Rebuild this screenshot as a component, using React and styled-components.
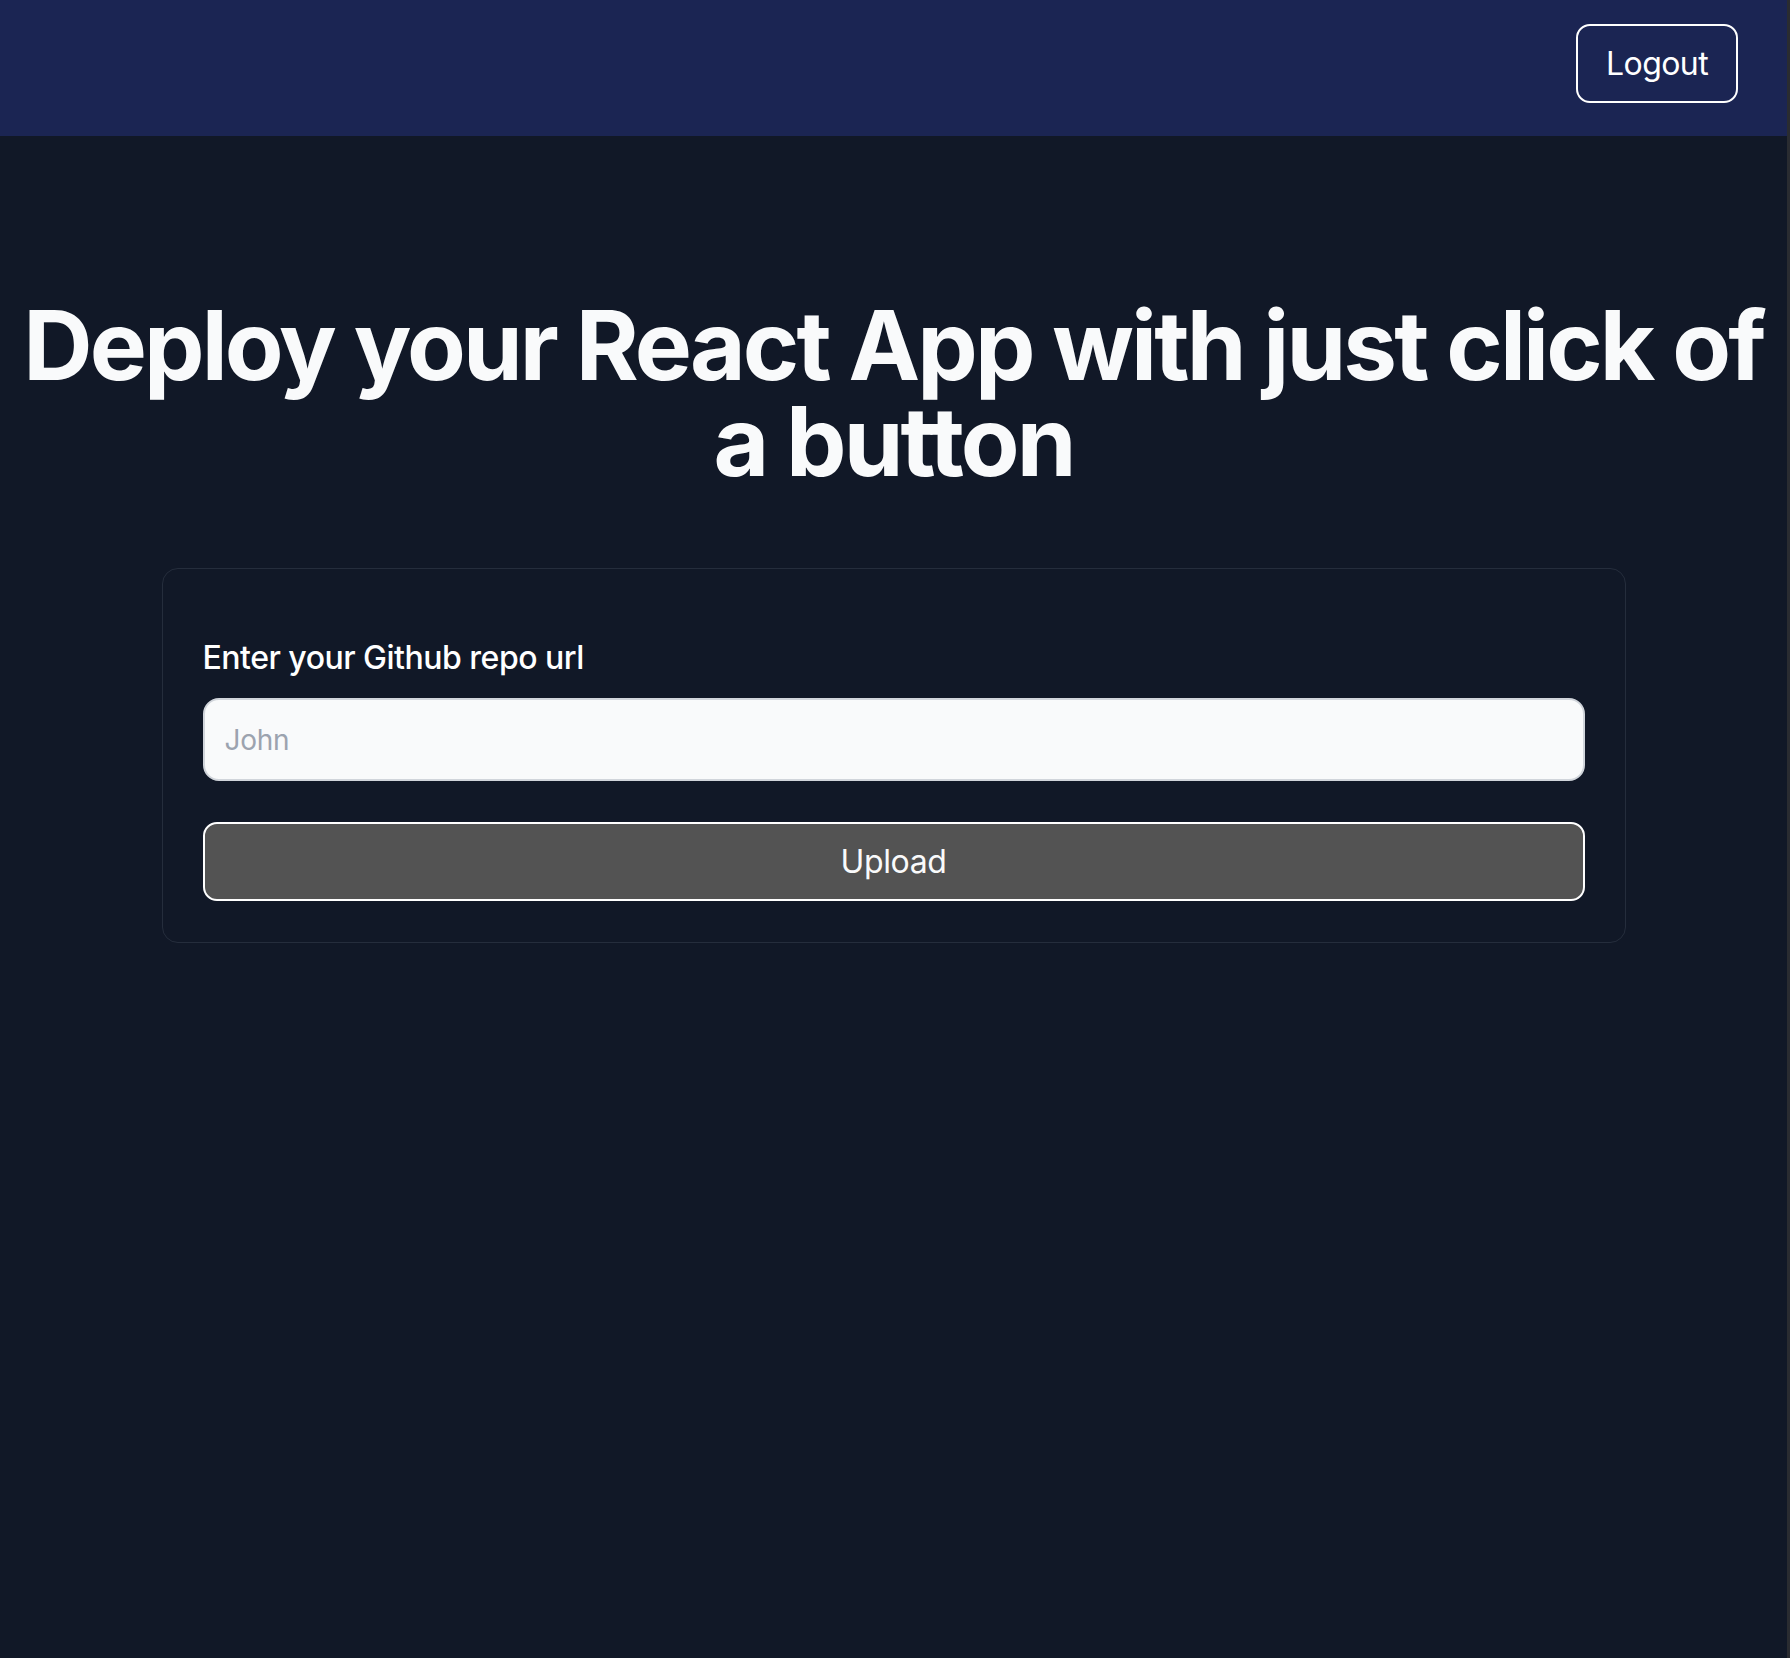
import React, { useState } from "react";
import styled, { createGlobalStyle } from "styled-components";

const GlobalStyle = createGlobalStyle`
  * {
    box-sizing: border-box;
  }
  html, body {
    margin: 0;
    padding: 0;
    background: #111827;
  }
  body {
    font-family: Inter, "Noto Sans", "Liberation Sans", sans-serif;
  }
`;

const Page = styled.div`
  min-height: 1658px;
  background: #111827;
  border-right: 3px solid #2a2c31;
  display: flex;
  flex-direction: column;
`;

const Navbar = styled.header`
  height: 136px;
  background: #1b2553;
  display: flex;
  justify-content: flex-end;
  align-items: flex-start;
  padding: 24px 49px 0 0;
`;

const OutlineButton = styled.button`
  font-family: inherit;
  font-size: 32px;
  line-height: 48px;
  letter-spacing: -0.6px;
  color: #ffffff;
  background: transparent;
  border: 2px solid #ffffff;
  border-radius: 14px;
  padding: 13.5px 28px;
  cursor: pointer;
`;

const Main = styled.main`
  display: flex;
  flex-direction: column;
  align-items: center;
  padding-top: 161px;
`;

const Title = styled.h1`
  margin: 0;
  font-size: 96px;
  line-height: 96px;
  font-weight: 700;
  letter-spacing: -2.9px;
  color: #f9fafb;
  text-align: center;
`;

const Card = styled.form`
  margin-top: 79px;
  width: 1464px;
  border: 1px solid #252d3c;
  border-radius: 16px;
  padding: 65px 40px 41px;
  display: flex;
  flex-direction: column;
`;

const Label = styled.label`
  font-size: 32px;
  line-height: 48px;
  font-weight: 500;
  letter-spacing: -0.5px;
  color: #ffffff;
  margin-bottom: 16px;
`;

const TextInput = styled.input`
  font-family: inherit;
  width: 100%;
  height: 83px;
  font-size: 28px;
  line-height: 40px;
  letter-spacing: -0.3px;
  padding: 0 20px;
  color: #111827;
  background: #f9fafb;
  border: 2px solid #d1d5db;
  border-radius: 16px;
  outline: none;
  &::placeholder {
    color: #9ca3af;
  }
`;

const SubmitButton = styled.button`
  font-family: inherit;
  margin-top: 41px;
  width: 100%;
  height: 79px;
  font-size: 32px;
  line-height: 48px;
  letter-spacing: -0.4px;
  color: #f9fafb;
  background: #535353;
  border: 2px solid #ffffff;
  border-radius: 14px;
  cursor: pointer;
`;

const App = () => {
  const [repoUrl, setRepoUrl] = useState("");

  const onSubmit = (e) => {
    e.preventDefault();
  };

  return (
    <>
      <GlobalStyle />
      <Page>
        <Navbar>
          <OutlineButton type="button">Logout</OutlineButton>
        </Navbar>
        <Main>
          <Title>Deploy your React App with just click of a button</Title>
          <Card onSubmit={onSubmit}>
            <Label htmlFor="repo">Enter your Github repo url</Label>
            <TextInput
              id="repo"
              type="text"
              placeholder="John"
              value={repoUrl}
              onChange={(e) => setRepoUrl(e.target.value)}
            />
            <SubmitButton type="submit">Upload</SubmitButton>
          </Card>
        </Main>
      </Page>
    </>
  );
};

export default App;
